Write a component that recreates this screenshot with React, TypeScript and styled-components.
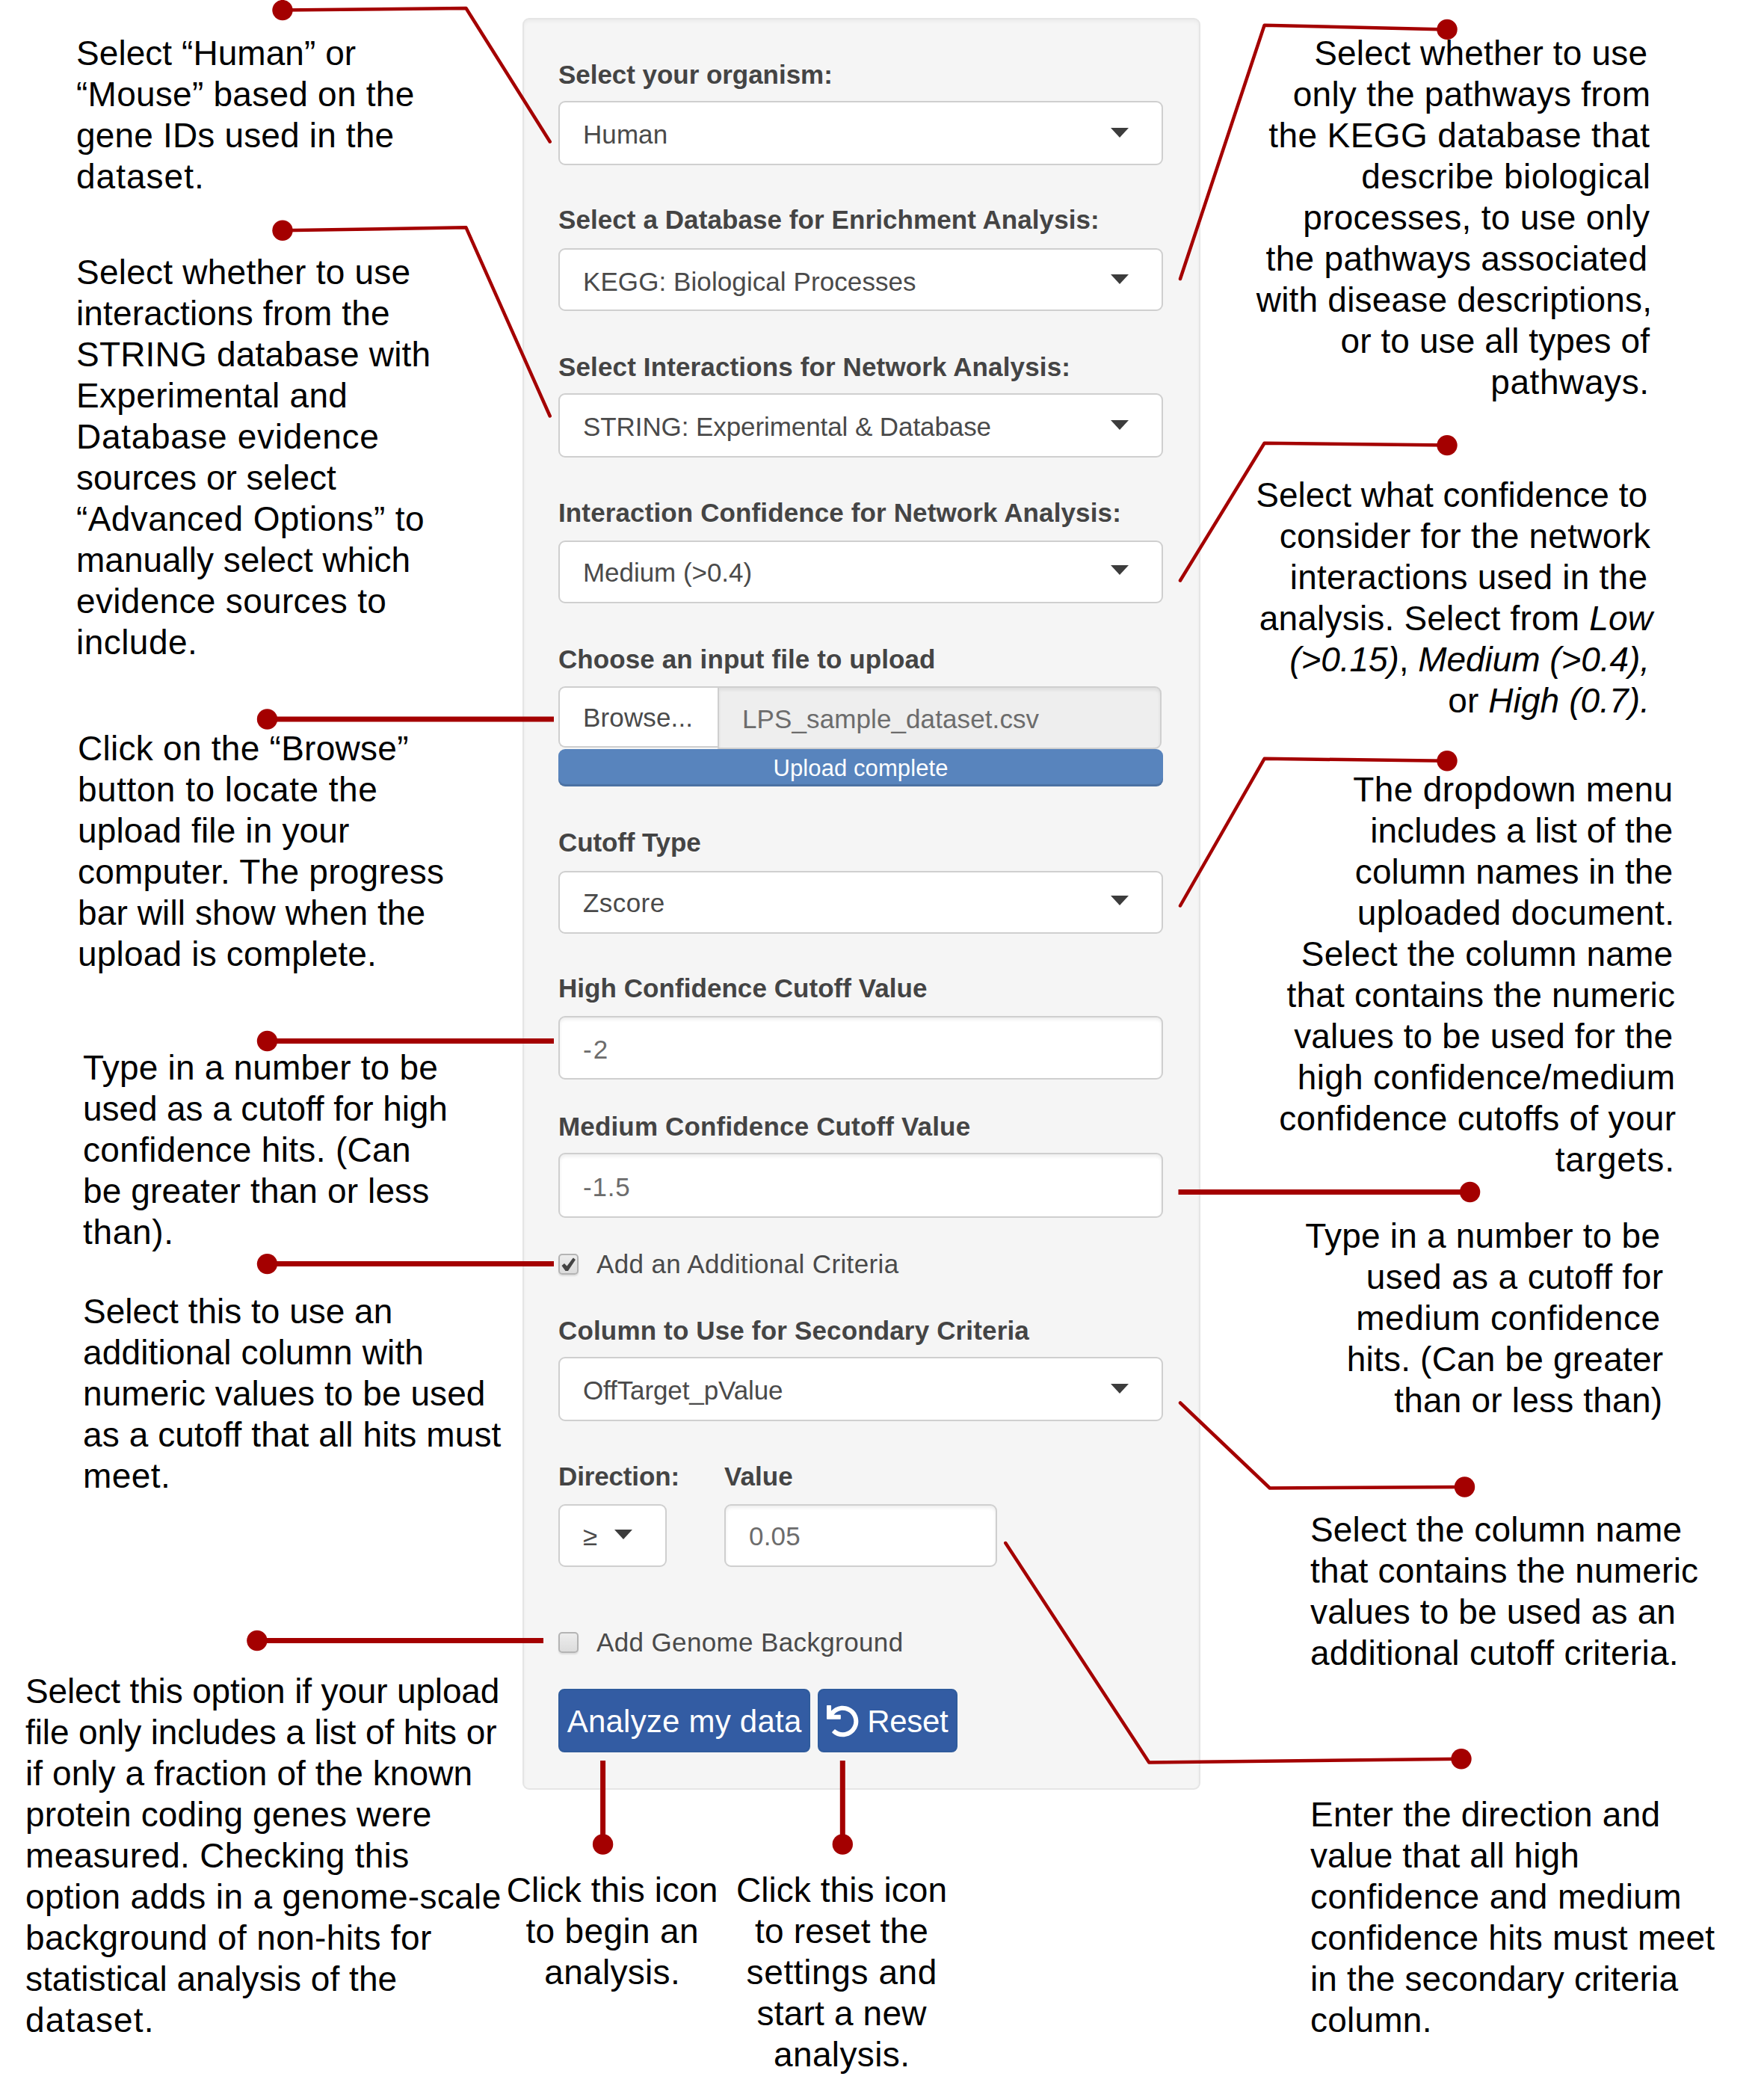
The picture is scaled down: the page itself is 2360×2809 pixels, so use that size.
import React, { ReactNode, useLayoutEffect, useRef, useState } from "react";
import styled, { createGlobalStyle } from "styled-components";
import { FaUndo } from "react-icons/fa";

const RED = "#a40000";
const INK = "#444444";
const SANS = `"Liberation Sans", Arial, Helvetica, sans-serif`;

const GlobalStyle = createGlobalStyle`
  * { box-sizing: border-box; }
  html, body { margin: 0; background: #ffffff; }
  body { font-family: ${SANS}; color: #000000; }
`;

/* ---------- text tracked to a set measure ---------- */

const Tracked = styled.span`
  display: inline-block;
  white-space: pre;
`;

function Fit({ width, end = 0, children }: { width: number; end?: number; children: ReactNode }) {
  const ref = useRef<HTMLSpanElement>(null);
  const [spacing, setSpacing] = useState(0);
  useLayoutEffect(() => {
    const el = ref.current;
    if (!el) return;
    const previous = el.style.letterSpacing;
    el.style.letterSpacing = "0px";
    const natural = el.getBoundingClientRect().width;
    el.style.letterSpacing = previous;
    const bearing = parseFloat(getComputedStyle(el).fontSize) * 0.06;
    const gaps = Math.max(1, (el.textContent || "").length - 1);
    setSpacing((width + bearing - natural) / gaps);
  }, [width]);
  return (
    <Tracked ref={ref} style={{ letterSpacing: spacing, marginRight: end - spacing }}>
      {children}
    </Tracked>
  );
}

/* ---------- page ---------- */

const Page = styled.main`
  position: relative;
  display: grid;
  grid-template-columns: 699px 907px 754px;
  width: 2360px;
  height: 2809px;
  overflow: hidden;
  background: #ffffff;
`;

const Column = styled.div`
  display: flex;
  flex-direction: column;
`;

const NoteBox = styled.p<{ $mt: number; $inset: number; $align: "left" | "right" | "center" }>`
  display: flex;
  flex-direction: column;
  align-items: ${(p) => (p.$align === "left" ? "flex-start" : p.$align === "right" ? "flex-end" : "center")};
  margin: ${(p) => p.$mt}px 0 0;
  padding-left: ${(p) => (p.$align === "left" ? p.$inset : 0)}px;
  padding-right: ${(p) => (p.$align === "right" ? p.$inset : 0)}px;
  font-size: 46px;
  line-height: 55px;
`;

type Line = [ReactNode, number, number?];

type NoteProps = {
  mt: number;
  inset?: number;
  align?: "left" | "right" | "center";
  lines: Line[];
};

function Note({ mt, inset = 0, align = "left", lines }: NoteProps) {
  return (
    <NoteBox $mt={mt} $inset={inset} $align={align}>
      {lines.map(([text, width, end], i) => (
        <Fit key={i} width={width} end={end}>
          {text}
        </Fit>
      ))}
    </NoteBox>
  );
}

/* ---------- form panel ---------- */

const Panel = styled.form`
  display: flex;
  flex-direction: column;
  height: 2370px;
  margin-top: 24px;
  padding: 1px 48px 0 46px;
  border: 2px solid #e5e5e5;
  border-radius: 9px;
  background: #f5f5f5;
  box-shadow: inset 0 3px 4px rgba(0, 0, 0, 0.04);
  color: ${INK};
  font-size: 35px;
`;

const FieldBox = styled.div<{ $mt: number }>`
  display: flex;
  flex-direction: column;
  align-items: stretch;
  margin-top: ${(p) => p.$mt}px;
`;

const Label = styled.label<{ $gap: number }>`
  height: 50px;
  margin-bottom: ${(p) => p.$gap}px;
  font-weight: 700;
  line-height: 50px;
`;

const Control = styled.div<{ $h: number; $drop?: number; $input?: boolean }>`
  display: flex;
  align-items: center;
  justify-content: space-between;
  height: ${(p) => p.$h}px;
  padding: ${(p) => p.$drop ?? 2}px 44px 0 31px;
  border: 2px solid #cfcfcf;
  border-radius: 9px;
  background: #ffffff;
  box-shadow: ${(p) => (p.$input ? "inset 0 3px 4px rgba(0, 0, 0, 0.07)" : "none")};
  color: ${(p) => (p.$input ? "#6c6c6c" : "#4a4a4a")};
`;

const Caret = styled.span`
  width: 0;
  height: 0;
  margin-top: -6px;
  border-top: 13px solid #3c3c3c;
  border-left: 12px solid transparent;
  border-right: 12px solid transparent;
`;

type FieldProps = {
  mt: number;
  gap: number;
  h: number;
  label: string;
  labelWidth: number;
  value: string;
  valueWidth: number;
  drop?: number;
  input?: boolean;
};

function Field({ mt, gap, h, label, labelWidth, value, valueWidth, drop, input }: FieldProps) {
  return (
    <FieldBox $mt={mt}>
      <Label $gap={gap}>
        <Fit width={labelWidth}>{label}</Fit>
      </Label>
      <Control $h={h} $drop={drop} $input={input}>
        <Fit width={valueWidth}>{value}</Fit>
        {!input && <Caret />}
      </Control>
    </FieldBox>
  );
}

const FileRow = styled.div`
  display: flex;
  height: 84px;
  margin-right: 2px;
`;

const BrowseButton = styled.div`
  width: 213px;
  height: 82px;
  padding-left: 31px;
  border: 2px solid #cfcfcf;
  border-right: 0;
  border-radius: 9px 0 0 9px;
  background: #ffffff;
  color: #4a4a4a;
  line-height: 80px;
`;

const FileName = styled.div`
  flex: 1;
  padding-left: 31px;
  border: 2px solid #cfcfcf;
  border-radius: 0 9px 9px 0;
  background: #eeeeee;
  box-shadow: inset 0 3px 4px rgba(0, 0, 0, 0.07);
  color: #6c6c6c;
  line-height: 84px;
`;

const Progress = styled.div`
  height: 50px;
  border-radius: 9px;
  background: #5884bd;
  box-shadow: inset 0 -3px 1px rgba(0, 0, 0, 0.14);
  color: #ffffff;
  font-size: 31px;
  line-height: 52px;
  text-align: center;
`;

const CheckRow = styled.label<{ $mt: number }>`
  display: flex;
  align-items: center;
  gap: 24px;
  height: 50px;
  margin-top: ${(p) => p.$mt}px;
  color: #4a4a4a;
`;

const CheckBox = styled.span`
  display: flex;
  align-items: center;
  justify-content: center;
  width: 27px;
  height: 28px;
  border: 2px solid #b4b4b4;
  border-radius: 5px;
  background: linear-gradient(#ededed, #dcdcdc);
  box-shadow: 0 2px 2px rgba(0, 0, 0, 0.1);
`;

const PairRow = styled.div`
  display: flex;
  gap: 77px;
  margin-top: 49px;
`;

const PairCell = styled.div<{ $w: number }>`
  display: flex;
  flex-direction: column;
  width: ${(p) => p.$w}px;
  white-space: nowrap;
`;

const CompactControl = styled(Control)`
  justify-content: flex-start;
  gap: 23px;
  padding-right: 0;
`;

const ButtonRow = styled.div`
  display: flex;
  gap: 10px;
  margin-top: 37px;
`;

const Button = styled.button<{ $w: number }>`
  display: flex;
  align-items: center;
  justify-content: center;
  gap: 11px;
  width: ${(p) => p.$w}px;
  height: 85px;
  padding: 2px 0 0;
  border: 2px solid #2f5b9c;
  border-radius: 8px;
  background: #335ca3;
  color: #ffffff;
  font-family: ${SANS};
  font-size: 42px;
`;

const CheckMark = () => (
  <svg width="21" height="21" viewBox="0 0 21 21">
    <path d="M1.5 12 L5 9 L8.5 12.5 L16 2.5 L17 1.5 L20 4 L10 19 L6.5 19 Z" fill="#444444" />
  </svg>
);

/* ---------- captions under the panel ---------- */

const Captions = styled.div`
  display: flex;
  gap: 7px;
  margin: 107px 0 0 -30px;
`;

const Caption = styled.div`
  width: 300px;
`;

/* ---------- connectors ---------- */

const Overlay = styled.svg`
  position: absolute;
  inset: 0;
  pointer-events: none;
`;

type Connector = { thick?: boolean; points: [number, number][] };

const connectors: Connector[] = [
  { points: [[378, 13.6], [623.5, 11], [735.7, 189.5]] },
  { points: [[378, 308.3], [623.5, 304.3], [735.7, 556.5]] },
  { thick: true, points: [[357.5, 962], [741, 962]] },
  { thick: true, points: [[357.5, 1392.5], [741, 1392.5]] },
  { thick: true, points: [[357.5, 1690.6], [741, 1690.6]] },
  { thick: true, points: [[343.9, 2194.5], [727, 2194.5]] },
  { thick: true, points: [[806.6, 2467], [806.6, 2355]] },
  { thick: true, points: [[1127.3, 2467], [1127.3, 2355]] },
  { points: [[1936, 39.4], [1691.6, 33.8], [1579, 373]] },
  { points: [[1936, 595.6], [1691.6, 592.8], [1579, 776.5]] },
  { points: [[1936, 1017.8], [1691.6, 1014.8], [1579, 1211.5]] },
  { thick: true, points: [[1966.6, 1594.5], [1576.5, 1594.5]] },
  { points: [[1959.5, 1989], [1698.8, 1990.5], [1579, 1876.5]] },
  { points: [[1955, 2352.8], [1537.3, 2357.5], [1345.3, 2064]] },
];

/* ---------- notes ---------- */

const leftNotes: NoteProps[] = [
  { mt: 44, inset: 102, lines: [["Select “Human” or", 371.4], ["“Mouse” based on the", 449.5], ["gene IDs used in the", 422.4], ["dataset.", 168]] },
  {
    mt: 73,
    inset: 102,
    lines: [
      ["Select whether to use", 444.4], ["interactions from the", 416.8], ["STRING database with", 471.4], ["Experimental and", 360.2],
      ["Database evidence", 402], ["sources or select", 345], ["“Advanced Options” to", 462.8], ["manually select which", 444.4],
      ["evidence sources to", 412.2], ["include.", 159],
    ],
  },
  {
    mt: 87,
    inset: 104,
    lines: [
      ["Click on the “Browse”", 439.7], ["button to locate the", 398], ["upload file in your", 360.6],
      ["computer. The progress", 487.2], ["bar will show when the", 462.4], ["upload is complete.", 397],
    ],
  },
  {
    mt: 97,
    inset: 111,
    lines: [
      ["Type in a number to be", 472], ["used as a cutoff for high", 485.2], ["confidence hits. (Can", 435.8],
      ["be greater than or less", 460.5], ["than).", 118.3],
    ],
  },
  {
    mt: 51,
    inset: 111,
    lines: [
      ["Select this to use an", 411.5], ["additional column with", 453.2], ["numeric values to be used", 535.6],
      ["as a cutoff that all hits must", 556.5], ["meet.", 114],
    ],
  },
  {
    mt: 233,
    inset: 34,
    lines: [
      ["Select this option if your upload", 631.6], ["file only includes a list of hits or", 627.7], ["if only a fraction of the known", 595.3],
      ["protein coding genes were", 540.5], ["measured. Checking this", 510.4], ["option adds in a genome-scale", 633.5],
      ["background of non-hits for", 540.5], ["statistical analysis of the", 494.4], ["dataset.", 168.7],
    ],
  },
];

const rightNotes: NoteProps[] = [
  {
    mt: 44,
    inset: 152,
    align: "right",
    lines: [
      ["Select whether to use", 443, 4], ["only the pathways from", 475.5, 0], ["the KEGG database that", 507, 1], ["describe biological", 384, 0],
      ["processes, to use only", 461, 1], ["the pathways associated", 507.7, 4], ["with disease descriptions,", 526.5, -2],
      ["or to use all types of", 410.7, 1], ["pathways.", 209, 2],
    ],
  },
  {
    mt: 96,
    inset: 152,
    align: "right",
    lines: [
      ["Select what confidence to", 521, 4], ["consider for the network", 493.4, 0], ["interactions used in the", 475.5, 4],
      [<>analysis. Select from <i>Low</i></>, 523.5, -3],
      [<><i>(&gt;0.15)</i>, <i>Medium (&gt;0.4),</i></>, 479, 1],
      [<>or <i>High (0.7).</i></>, 267, 1],
    ],
  },
  {
    mt: 64,
    inset: 118,
    align: "right",
    lines: [
      ["The dropdown menu", 425, 4], ["includes a list of the", 402, 4], ["column names in the", 422.4, 4], ["uploaded document.", 421.4, 2],
      ["Select the column name", 494.4, 4], ["that contains the numeric", 516.8, 1], ["values to be used for the", 504, 4],
      ["high confidence/medium", 502.5, 1], ["confidence cutoffs of your", 528, 0], ["targets.", 156.6, 2],
    ],
  },
  {
    mt: 47,
    inset: 135,
    align: "right",
    lines: [
      ["Type in a number to be", 472, 4], ["used as a cutoff for", 394.4, 0], ["medium confidence", 404, 4], ["hits. (Can be greater", 420.4, 0], ["than or less than)", 356, 1],
    ],
  },
  {
    mt: 118,
    inset: 147,
    lines: [["Select the column name", 494.4], ["that contains the numeric", 516.3], ["values to be used as an", 486.2], ["additional cutoff criteria.", 489.8]],
  },
  {
    mt: 161,
    inset: 147,
    lines: [
      ["Enter the direction and", 465.3], ["value that all high", 357.1], ["confidence and medium", 493.9], ["confidence hits must meet", 538.3],
      ["in the secondary criteria", 489.3], ["column.", 159.7],
    ],
  },
];

export default function App() {
  return (
    <>
      <GlobalStyle />
      <Page>
        <Column>
          {leftNotes.map((n, i) => (
            <Note key={i} {...n} />
          ))}
        </Column>

        <Column>
          <Panel>
            <Field mt={48} gap={10} h={86} drop={4} label="Select your organism:" labelWidth={364.7} value="Human" valueWidth={111} />
            <Field mt={48} gap={13} h={84} drop={5} label="Select a Database for Enrichment Analysis:" labelWidth={721.6} value="KEGG: Biological Processes" valueWidth={443.5} />
            <Field mt={50} gap={10} h={86} drop={4} label="Select Interactions for Network Analysis:" labelWidth={682.8} value="STRING: Experimental & Database" valueWidth={544} />
            <Field mt={49} gap={12} h={84} drop={1} label="Interaction Confidence for Network Analysis:" labelWidth={750.7} value="Medium (>0.4)" valueWidth={224} />

            <FieldBox $mt={50}>
              <Label $gap={11}>
                <Fit width={502.3}>Choose an input file to upload</Fit>
              </Label>
              <FileRow>
                <BrowseButton>
                  <Fit width={145}>Browse...</Fit>
                </BrowseButton>
                <FileName>
                  <Fit width={395}>LPS_sample_dataset.csv</Fit>
                </FileName>
              </FileRow>
              <Progress>
                <Fit width={232}>Upload complete</Fit>
              </Progress>
            </FieldBox>

            <Field mt={50} gap={13} h={84} drop={1} label="Cutoff Type" labelWidth={188.6} value="Zscore" valueWidth={107} />
            <Field mt={48} gap={12} h={85} drop={5} input label="High Confidence Cutoff Value" labelWidth={491.4} value="-2" valueWidth={31} />
            <Field mt={38} gap={10} h={87} drop={4} input label="Medium Confidence Cutoff Value" labelWidth={549} value="-1.5" valueWidth={60.6} />

            <CheckRow $mt={37}>
              <CheckBox>
                <CheckMark />
              </CheckBox>
              <Fit width={402}>Add an Additional Criteria</Fit>
            </CheckRow>

            <Field mt={39} gap={10} h={86} drop={4} label="Column to Use for Secondary Criteria" labelWidth={627.7} value="OffTarget_pValue" valueWidth={265.4} />

            <PairRow>
              <PairCell $w={145}>
                <Label $gap={12}>
                  <Fit width={160}>Direction:</Fit>
                </Label>
                <CompactControl $h={84} $drop={2}>
                  <span>≥</span>
                  <Caret />
                </CompactControl>
              </PairCell>
              <PairCell $w={365}>
                <Label $gap={12}>
                  <Fit width={89.7}>Value</Fit>
                </Label>
                <Control $h={84} $drop={2} $input>
                  <Fit width={66.6}>0.05</Fit>
                </Control>
              </PairCell>
            </PairRow>

            <CheckRow $mt={76}>
              <CheckBox />
              <Fit width={408}>Add Genome Background</Fit>
            </CheckRow>

            <ButtonRow>
              <Button type="button" $w={337}>
                <Fit width={311}>Analyze my data</Fit>
              </Button>
              <Button type="button" $w={187}>
                <FaUndo size={43} />
                <Fit width={106}>Reset</Fit>
              </Button>
            </ButtonRow>
          </Panel>

          <Captions>
            <Caption>
              <Note mt={0} align="center" lines={[["Click this icon", 280], ["to begin an", 228.4], ["analysis.", 178.7]]} />
            </Caption>
            <Caption>
              <Note
                mt={0}
                align="center"
                lines={[["Click this icon", 279.3], ["to reset the", 229], ["settings and", 252], ["start a new", 224], ["analysis.", 179.3]]}
              />
            </Caption>
          </Captions>
        </Column>

        <Column>
          {rightNotes.map((n, i) => (
            <Note key={i} {...n} />
          ))}
        </Column>

        <Overlay width="2360" height="2809" viewBox="0 0 2360 2809">
          {connectors.map(({ thick, points }, i) => (
            <g key={i}>
              <polyline
                points={points.map((p) => p.join(",")).join(" ")}
                fill="none"
                stroke={RED}
                strokeWidth={thick ? 7 : 4.5}
                strokeLinecap={thick ? "butt" : "round"}
                strokeLinejoin="round"
              />
              <circle cx={points[0][0]} cy={points[0][1]} r={13.7} fill={RED} />
            </g>
          ))}
        </Overlay>
      </Page>
    </>
  );
}
